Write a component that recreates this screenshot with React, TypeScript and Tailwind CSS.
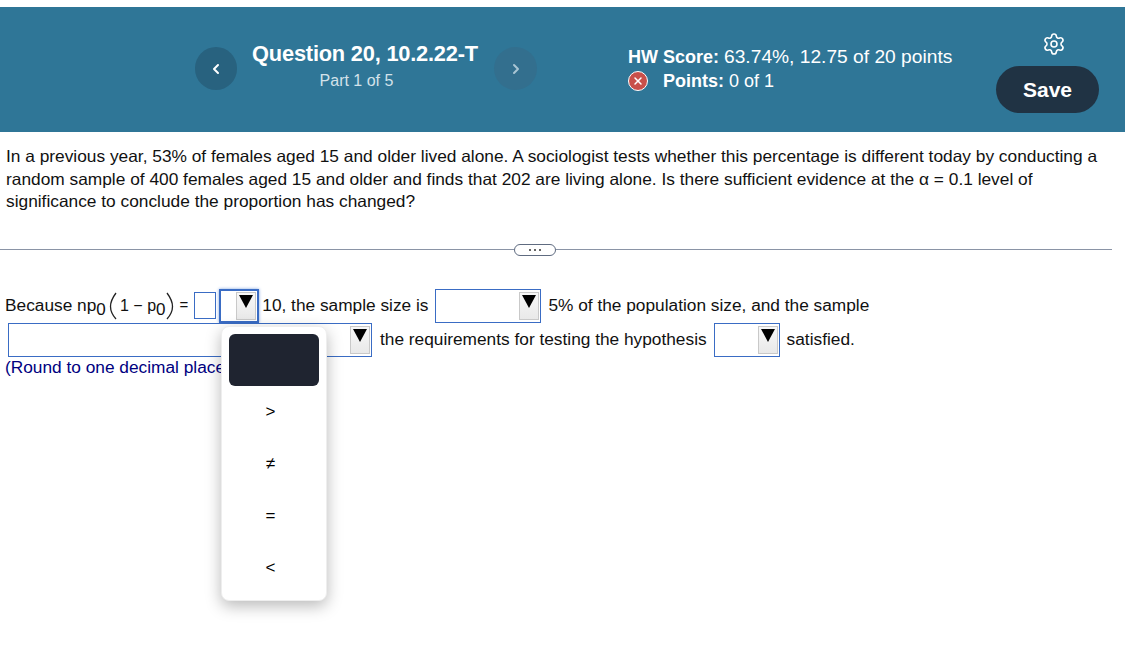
import React from 'react';
import { ChevronLeft, ChevronRight, Settings, X } from 'lucide-react';

const Arrow = () => (
  <span className="flex h-[28px] w-[20px] items-start justify-center border border-[#c9c9c9] bg-gradient-to-b from-[#f8f8f8] to-[#e9e9e9] pt-[2px]">
    <svg width="14" height="13" viewBox="0 0 14 13">
      <path d="M0 0H14L7 13Z" fill="#000" />
    </svg>
  </span>
);

const Select = ({ width, focused }: { width: string; focused?: boolean }) => (
  <span
    className={`flex h-[34px] shrink-0 items-center justify-end bg-white pr-[1px] ${width} ${
      focused ? 'border-2 border-[#3a6cc4] shadow-[0_0_3px_#7da2e0]' : 'border border-[#3a6cc4]'
    }`}
  >
    <Arrow />
  </span>
);

const Sub = ({ children }: { children: React.ReactNode }) => (
  <span className="relative top-[4px] text-[17px] leading-none">{children}</span>
);

const Paren = ({ flip }: { flip?: boolean }) => (
  <svg width="8" height="28" viewBox="0 0 8 28" className={flip ? 'scale-x-[-1]' : ''}>
    <path d="M7 1C2.5 7 1.5 11 1.5 14.5C1.5 18 2.5 22 7 27" fill="none" stroke="#222" strokeWidth="1.3" />
  </svg>
);

const options = ['', '>', '≠', '=', '<'];

const OptionsMenu = () => (
  <div className="absolute left-[221px] top-[326px] flex h-[275px] w-[106px] flex-col rounded-lg border border-[#eeeeee] bg-white px-[7px] pt-[7px] shadow-[0_5px_16px_rgba(0,0,0,0.28)]">
    {options.map((opt, i) => (
      <div
        key={i}
        className={`flex h-[52px] shrink-0 items-center justify-center rounded-md text-[17px] text-black ${
          i === 0 ? 'bg-[#1f2430]' : 'pr-[7px]'
        }`}
      >
        {opt}
      </div>
    ))}
  </div>
);

const Header = () => (
  <header className="flex h-[125px] w-[1125px] bg-[#2f7697] pl-[195px] text-white">
    <button className="mt-[40px] flex h-[43px] w-[42px] items-center justify-center rounded-full bg-[#28627f]">
      <ChevronLeft size={16} strokeWidth={3} />
    </button>
    <div className="ml-[15px] mt-[34px] flex w-[226px] flex-col items-center">
      <div className="whitespace-nowrap text-[21.8px] font-bold leading-[26px] tracking-[-0.2px]">
        Question 20, 10.2.22-T
      </div>
      <div className="mr-[17px] mt-[4px] text-[16px] leading-[20px] text-[#d3e2ea]">Part 1 of 5</div>
    </div>
    <button className="ml-[16px] mt-[40px] flex h-[43px] w-[43px] items-center justify-center rounded-full bg-[#336f8e] text-[#a9c5d4]">
      <ChevronRight size={16} strokeWidth={3} />
    </button>
    <div className="ml-[91px] mt-[38px] w-[368px] text-[18px] leading-[24px]">
      <div>
        <b>HW Score:</b> <span className="text-[19.2px]">63.74%, 12.75 of 20 points</span>
      </div>
      <div className="flex items-center">
        <span className="flex h-[20px] w-[20px] items-center justify-center rounded-full border border-white bg-[#c8504a]">
          <X size={12} strokeWidth={3} />
        </span>
        <span className="ml-[15px]">
          <b>Points:</b> 0 of 1
        </span>
      </div>
    </div>
    <div className="mt-[25px] flex w-[103px] flex-col items-center">
      <Settings size={24} strokeWidth={1.6} className="ml-[12px]" />
      <button className="mt-[10px] h-[47px] w-[103px] rounded-full bg-[#203344] text-[21px] font-bold">Save</button>
    </div>
  </header>
);

export default function App() {
  return (
    <div className="relative h-[650px] w-[1134px] overflow-hidden bg-white pt-[7px] font-['Liberation_Sans',Arial,sans-serif] text-[17.3px] text-[#111]">
      <Header />

      <p className="w-[1110px] pl-[6px] pt-[13px] text-[17.32px] leading-[22.5px]">
        In a previous year, 53% of females aged 15 and older lived alone. A sociologist tests whether this percentage is
        different today by conducting a random sample of 400 females aged 15 and older and finds that 202 are living
        alone. Is there sufficient evidence at the α = 0.1 level of significance to conclude the proportion has changed?
      </p>

      <div className="mt-[31px] flex h-[12px] w-[1112px] items-center">
        <div className="h-px flex-1 bg-[#8a94a6]" />
        <div className="flex h-[12px] w-[42px] items-center justify-center gap-[3px] rounded-full border border-[#5f6b80]">
          <i className="h-[2px] w-[2px] rounded-full bg-[#333]" />
          <i className="h-[2px] w-[2px] rounded-full bg-[#333]" />
          <i className="h-[2px] w-[2px] rounded-full bg-[#333]" />
        </div>
        <div className="h-px w-[556px] bg-[#8a94a6]" />
      </div>

      <div className="mt-[33px] flex h-[34px] items-center whitespace-nowrap pl-[5px]">
        <span className="w-[104px]">
          Because np<Sub>0</Sub>
        </span>
        <Paren />
        <span className="ml-[3px] text-[16px]">1 − p</span>
        <Sub>0</Sub>
        <Paren flip />
        <span className="ml-[6px] text-[15px]">=</span>
        <span className="ml-[6px] h-[27px] w-[22px] border border-[#3a6cc4] bg-white" />
        <span className="ml-[3px]">
          <Select width="w-[40px]" focused />
        </span>
        <span className="ml-[3px]">10, the sample size is</span>
        <span className="ml-[7px]">
          <Select width="w-[106px]" />
        </span>
        <span className="ml-[7px]">5% of the population size, and the sample</span>
      </div>

      <div className="flex h-[35px] items-center whitespace-nowrap pl-[8px]">
        <Select width="w-[364px]" />
        <span className="ml-[8px]">the requirements for testing the hypothesis</span>
        <span className="ml-[7px]">
          <Select width="w-[66px]" />
        </span>
        <span className="ml-[7px]">satisfied.</span>
      </div>

      <div className="pl-[5px] leading-[18px] text-[#000080]">(Round to one decimal place</div>

      <OptionsMenu />
    </div>
  );
}
